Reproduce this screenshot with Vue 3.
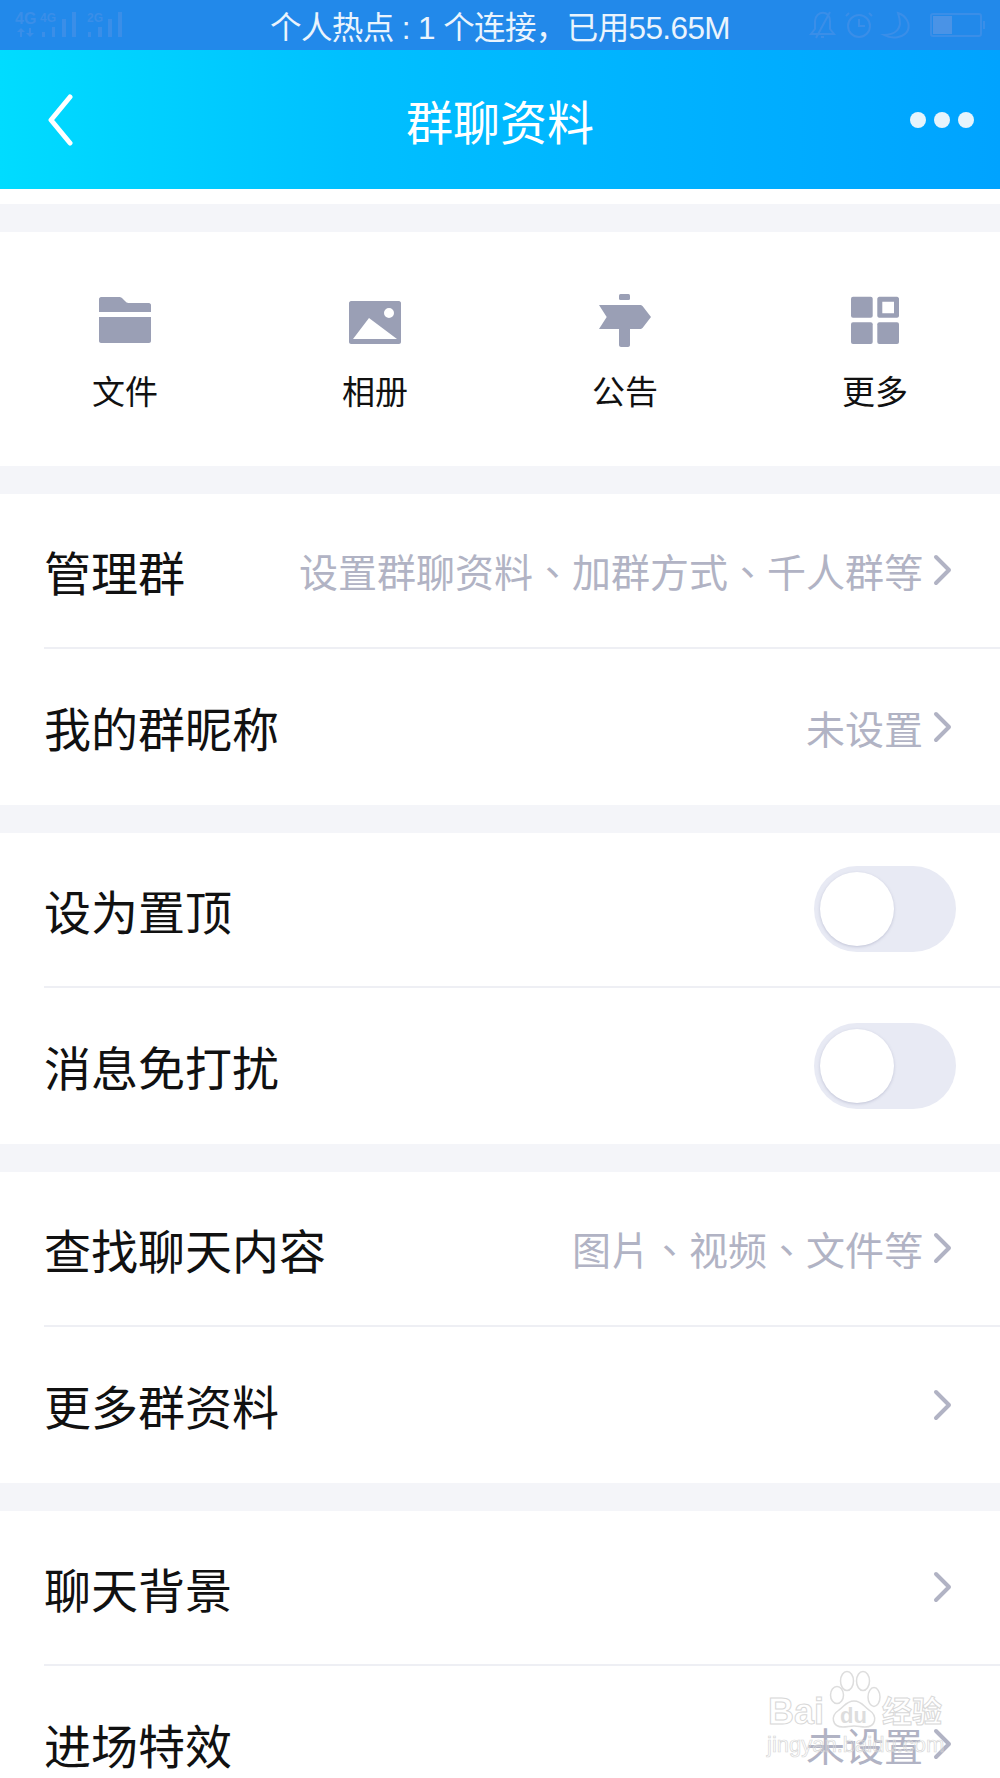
<script setup>
const tools = [
  { key: 'file', label: '文件' },
  { key: 'album', label: '相册' },
  { key: 'notice', label: '公告' },
  { key: 'more', label: '更多' },
]

const groups = [
  [
    { label: '管理群', value: '设置群聊资料、加群方式、千人群等', arrow: true },
    { label: '我的群昵称', value: '未设置', arrow: true },
  ],
  [
    { label: '设为置顶', toggle: true },
    { label: '消息免打扰', toggle: true },
  ],
  [
    { label: '查找聊天内容', value: '图片、视频、文件等', arrow: true },
    { label: '更多群资料', arrow: true },
  ],
  [
    { label: '聊天背景', arrow: true },
    { label: '进场特效', value: '未设置', arrow: true },
  ],
]
</script>

<template>
  <div class="page">
    <div class="status">
      <svg class="status-left" width="130" height="50" viewBox="0 0 130 50" fill="#3a8ee8">
        <text x="15" y="24" class="net-big">4G</text>
        <text x="40" y="22" class="net-small">4G</text>
        <path d="M20 37v-5h-3l4-4 4 4h-3v5zM29 28v5h-3l4 4 4-4h-3v-5z" />
        <rect x="42" y="32" width="3" height="5" />
        <rect x="52" y="27" width="3" height="10" />
        <rect x="62" y="19" width="4" height="18" />
        <rect x="72" y="12" width="4" height="25" />
        <text x="87" y="22" class="net-small">2G</text>
        <rect x="88" y="32" width="3" height="5" />
        <rect x="98" y="27" width="4" height="10" />
        <rect x="108" y="19" width="4" height="18" />
        <rect x="118" y="12" width="4" height="25" />
      </svg>
      <span class="status-text">个人热点 : 1 个连接，已用55.65M</span>
      <svg class="status-right" width="210" height="50" viewBox="790 0 210 50" fill="none" stroke="#3a8ee8" stroke-width="2">
        <path d="M811 34h23l-4-5V21c0-11-14-11-15 0v8zM821 37h3M830 12l-14 26" />
        <circle cx="859" cy="26" r="11" />
        <path d="M859 19v7h6M849 13l-3 3M869 13l3 3" />
        <path d="M898 13c9 3 12 11 10 17-3 7-15 10-24 5 10 0 15-5 16-11 0-5-1-8-2-11z" />
        <rect x="931" y="14" width="50" height="22" rx="2" />
        <rect x="933" y="16" width="19" height="18" fill="#4a93e6" stroke="none" />
        <rect x="983" y="21" width="2" height="8" fill="#3a8ee8" stroke="none" />
      </svg>
    </div>

    <header class="nav">
      <svg class="back" width="30" height="52" viewBox="0 0 30 52" fill="none">
        <path d="M24 3L5 26l19 23" stroke="#fff" stroke-width="5" stroke-linecap="round" stroke-linejoin="round" />
      </svg>
      <h1 class="title">群聊资料</h1>
      <div class="dots"><i></i><i></i><i></i></div>
    </header>

    <div class="white-strip"></div>
    <div class="gap"></div>

    <section class="tools">
      <div v-for="t in tools" :key="t.key" class="tool">
        <svg class="tool-icon" width="60" height="60" viewBox="0 0 60 60" fill="#9a9fb5">
          <template v-if="t.key === 'file'">
            <path d="M4 6c0-1 1-2 2-2h18c1.500 0 2.500.5 3.500 1.500l2.500 2.500c1 1 2 2 3.500 2H54c1 0 2 1 2 2v7H4z" />
            <path d="M4 24h52v24c0 1-1 2-2 2H6c-1 0-2-1-2-2z" />
          </template>
          <template v-else-if="t.key === 'album'">
            <path fill-rule="evenodd" d="M6 8h48c1 0 2 1 2 2v39c0 1-1 2-2 2H6c-1 0-2-1-2-2V10c0-1 1-2 2-2zM8 46h44L24 25zM44 15a5 5 0 1 0 0 10 5 5 0 0 0 0-10z" />
          </template>
          <template v-else-if="t.key === 'notice'">
            <rect x="24" y="1" width="11" height="6" rx="1.500" />
            <path d="M4 12h41c1 0 2 .5 2.500 1L56 24l-8.500 11c-.5.500-1.500 1-2.500 1H4l7.700-12z" />
            <path d="M24 36h11v16c0 1-1 2-2 2h-7c-1 0-2-1-2-2z" />
          </template>
          <template v-else>
            <rect x="6" y="3.700" width="21.700" height="21" rx="2" />
            <path fill-rule="evenodd" d="M34.300 3.700H52c1 0 2 1 2 2v17c0 1-1 2-2 2H34.300c-1 0-2-1-2-2v-17c0-1 1-2 2-2zM37.300 8.700v11.600H49V8.700z" />
            <rect x="6" y="29.300" width="21.700" height="21.700" rx="2" />
            <rect x="32.300" y="29.300" width="21.700" height="21.700" rx="2" />
          </template>
        </svg>
        <span class="tool-label">{{ t.label }}</span>
      </div>
    </section>

    <template v-for="(g, gi) in groups" :key="gi">
      <div class="gap"></div>
      <section class="group">
        <div v-for="r in g" :key="r.label" class="row">
          <span class="row-label">{{ r.label }}</span>
          <span v-if="r.value" class="row-value">{{ r.value }}</span>
          <svg v-if="r.arrow" class="chevron" width="20" height="34" viewBox="0 0 20 34" fill="none">
            <path d="M3 4l13 13L3 30" stroke="#b1b3c4" stroke-width="4" stroke-linecap="round" stroke-linejoin="round" />
          </svg>
          <div v-if="r.toggle" class="switch"><span class="knob"></span></div>
        </div>
      </section>
    </template>

    <div class="watermark">
      <svg class="paw" width="66" height="72" viewBox="0 0 66 72" fill="none" stroke="#ddd" stroke-width="1.500">
        <ellipse cx="10" cy="25" rx="6.500" ry="8.500" />
        <ellipse cx="20" cy="11" rx="6.500" ry="9.500" />
        <ellipse cx="36" cy="11" rx="6.500" ry="9.500" />
        <ellipse cx="47" cy="27" rx="6" ry="9.500" />
        <path d="M27 31c8 0 10 6 15 9 9 6 7 17-4 17-4 0-7-1-11-1s-7 1-11 1C5 57 3 46 12 40c5-3 7-9 15-9z" />
      </svg>
      <span class="wm-bai">Bai</span>
      <span class="wm-du">du</span>
      <span class="wm-cn">经验</span>
      <span class="wm-url">jingyan.baidu.com</span>
    </div>
  </div>
</template>

<style scoped>
.page {
  position: relative;
  width: 1000px;
  height: 1778px;
  overflow: hidden;
  background: #fff;
  font-family: "Noto Sans CJK SC", "Liberation Sans", sans-serif;
  color: #111;
}

.status {
  height: 50px;
  background: #2289ea;
  display: flex;
  align-items: center;
  justify-content: center;
  position: relative;
}

.status-left {
  position: absolute;
  left: 0;
  top: 0;
}

.status-right {
  position: absolute;
  right: 0;
  top: 0;
}

.net-big {
  font: bold 16px "Liberation Sans", sans-serif;
}

.net-small {
  font: bold 12px "Liberation Sans", sans-serif;
}

.status-text {
  color: #eaf4fd;
  font-size: 31.500px;
  line-height: 50px;
  letter-spacing: -0.6px;
  padding-top: 5px;
  font-family: "Liberation Sans", "Noto Sans CJK SC", sans-serif;
}

.nav {
  height: 139px;
  background: linear-gradient(90deg, #00dcff 0%, #00c0ff 35%, #00a3ff 100%);
  display: flex;
  align-items: center;
  justify-content: space-between;
  padding: 0 26px 0 46px;
  position: relative;
}

.title {
  position: absolute;
  left: 0;
  right: 0;
  margin: 0;
  text-align: center;
  font-weight: 400;
  font-size: 47px;
  color: #fff;
}

.dots {
  display: flex;
  gap: 8px;
}

.dots i {
  display: block;
  width: 16px;
  height: 16px;
  border-radius: 50%;
  background: #e6f4fc;
}

.white-strip {
  height: 15px;
}

.gap {
  height: 28px;
  background: #f4f5f9;
}

.tools {
  height: 233.500px;
  display: grid;
  grid-template-columns: repeat(4, 250px);
}

.tool {
  display: flex;
  flex-direction: column;
  align-items: center;
  padding-top: 61px;
}

.tool-icon {
  margin-bottom: 14px;
}

.tool-label {
  font-size: 33px;
  line-height: 46px;
}

.group {
  padding-left: 44px;
}

.row {
  height: 155.500px;
  display: flex;
  align-items: center;
  padding-right: 47px;
  border-bottom: 2px solid #eeeff4;
  box-sizing: border-box;
}

.group .row:last-child {
  border-bottom: none;
}

.row-label {
  font-size: 47px;
  flex: 1;
}

.row-value {
  font-size: 39px;
  color: #b1b3c4;
  margin-right: 10px;
  font-family: "Noto Sans CJK TC", "Noto Sans CJK SC", sans-serif;
}

.switch {
  width: 142px;
  height: 86px;
  border-radius: 43px;
  background: #e8eaf4;
  position: relative;
  margin-right: -3px;
}

.knob {
  position: absolute;
  left: 6px;
  top: 6px;
  width: 74px;
  height: 74px;
  border-radius: 50%;
  background: #fff;
  box-shadow: 0 1px 3px rgba(120, 125, 160, 0.35);
}

.watermark {
  position: absolute;
  left: 765px;
  top: 1670px;
  width: 190px;
  height: 100px;
  pointer-events: none;
}

.paw {
  position: absolute;
  left: 62px;
  top: 0;
}

.wm-bai,
.wm-cn {
  position: absolute;
  top: 22px;
  color: transparent;
  -webkit-text-stroke: 1px #d8d8d8;
  font-weight: 700;
  font-family: "Liberation Sans", "Noto Sans CJK SC", sans-serif;
  line-height: 40px;
}

.wm-bai {
  left: 3px;
  font-size: 36px;
}

.wm-cn {
  left: 117px;
  font-size: 30px;
}

.wm-du {
  position: absolute;
  left: 75px;
  top: 31px;
  font: 700 22px/30px "Liberation Sans", sans-serif;
  color: #ddd;
}

.wm-url {
  position: absolute;
  left: 2px;
  top: 60px;
  font: 22px/30px "Liberation Sans", sans-serif;
  color: transparent;
  -webkit-text-stroke: 0.7px #d8d8d8;
}
</style>
